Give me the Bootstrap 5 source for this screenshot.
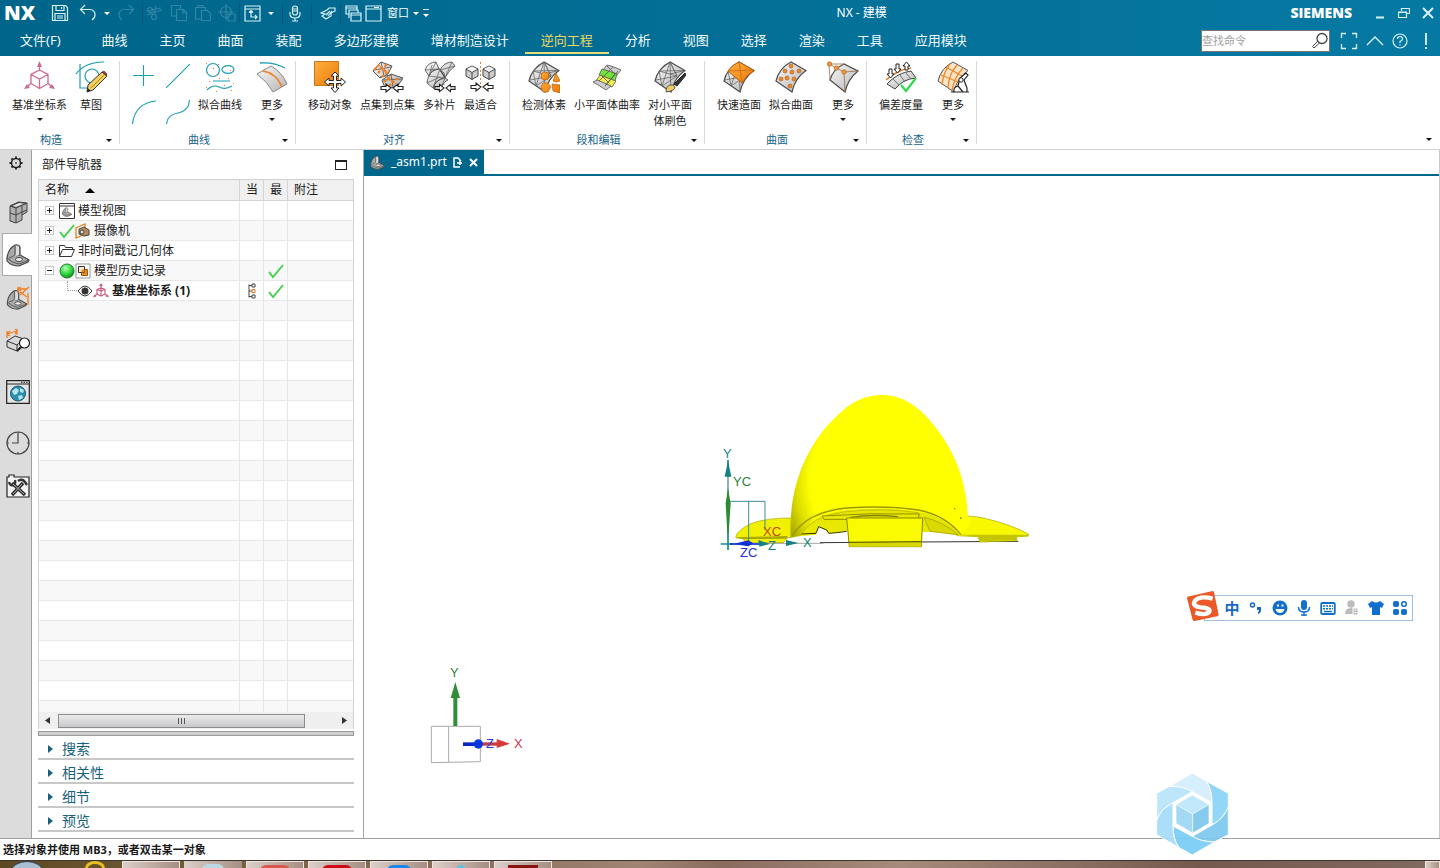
<!DOCTYPE html>
<html lang="zh-CN">
<head>
<meta charset="utf-8">
<meta name="viewport" content="width=device-width, initial-scale=1">
<title>NX - 建模</title>
<link href="https://cdn.jsdelivr.net/npm/bootstrap@5.3.0/dist/css/bootstrap.min.css" rel="stylesheet">
<style>
:root{--nx-blue:#00678c;--nx-line:#c8c8c8}
body{font-family:"Noto Sans","Noto Sans CJK SC",sans-serif;font-size:12px;line-height:16px;color:#1a1a1a;background:#fff;overflow:hidden}
svg{display:block;flex:none}
button{font:inherit;color:inherit;background:none;border:0;padding:0}
.hdr{background:linear-gradient(90deg,#00658a,#0679a3);color:#fff}
.titlebar{height:26px}
.brand{width:48px;padding-left:4px;font:800 20px/26px "Open Sans",sans-serif}
.qa{width:24px;height:26px;display:flex;align-items:center;justify-content:center}
.qa.off{opacity:.22}
.qa.slim{width:14px}
.qa-sep{width:1px;height:20px;background:#00567a}
.qa svg{fill:none;stroke:#d9f2f8;stroke-width:1.2}
.caret-s{width:0;height:0;border:3px solid transparent;border-top-color:currentColor;border-bottom:0}
.qa-text{font-size:11px}
.apptitle{font-size:12px}
.siemens{font:800 14px/28px "Open Sans",sans-serif}
.tabs{height:30px;font-size:13px}
.tabs a{color:#f0fafc;text-decoration:none;padding:2px 16px 0;line-height:24px;height:28px;border-bottom:2px solid transparent;white-space:nowrap;display:block}
.tabs a:first-child{padding:2px 25px 0 20px}
.tabs a.on{color:#f0d860;border-bottom-color:#e8dc78}
.find{width:129px;height:22px;background:#fff;border:1px solid #777;margin-right:2px}
.find input{width:100%;min-width:0;border:0;outline:0;font-size:11px;padding:0;background:none}
.find input::placeholder{color:#a0a0a0;opacity:1}
.ribbon{height:94px;border-bottom:1px solid #d0d0d0;font-size:11px}
.rgroup{border-right:1px solid #d8d8d8;margin:5px 0}
.rbody{padding:0 12px;height:70px;gap:8px}
.rbody.tail{padding-right:1px}
.rbtn{display:flex;flex-direction:column;align-items:center;min-width:32px;line-height:16px;white-space:nowrap}
.rbtn svg{width:32px;height:32px;margin-bottom:4px}
.rbtn.more{min-width:44px}
.rbtn .caret-s{margin-top:5px}
.rtitle{height:18px;color:#17648a;padding-right:7px}
.rtitle .caret-s,.rcollapse{color:#111}
.curves{display:grid;grid-template-columns:24px 24px;column-gap:10px;row-gap:12px;padding-top:3px;align-content:start}
.curves svg{width:24px;height:24px;fill:none;stroke:#1a9db5;stroke-width:1.1}
.rail{width:32px;background:#dcdcdc;border-right:1px solid #a0a0a0}
.rail button{height:43px;width:31px;display:flex;align-items:center;justify-content:center;padding-left:4px}
.rail .gear{height:26px;padding:0;margin-bottom:14px}
.rail .on{background:#fff;border:1px solid #aaa;border-right:0;width:30px;margin-left:2px;padding-left:1px;position:relative;margin-right:-1px}
.rail svg{width:24px;height:24px}
.panel{width:331px;padding:0 9px 6px 6px}
.ptitle{height:29px;padding:0 7px 0 4px}
.maxbox{width:12px;height:10px;border:1px solid #222;border-top-width:2px}
.treebox{border:1px solid #d4d4d4;border-bottom:0;border-top:1px solid #d0d0d0}
.tree{width:100%;table-layout:fixed;border-collapse:separate;border-spacing:0}
.tree th{height:21px;background:#f0f0f0;font-weight:400;padding:0 6px;border-right:1px solid #d4d4d4;border-bottom:1px solid #d4d4d4;white-space:nowrap}
.tree td{height:20px;padding:0;border-right:1px solid #e6e6e6;border-bottom:1px solid #e8e8e8;white-space:nowrap}
.tree tr>:last-child{border-right:0}
.tree tbody tr:nth-child(even){background:#f8f8f8}
.node{display:flex;align-items:center;height:19px;padding-left:6px}
.pm{width:9px;height:9px;border:1px solid #c4c4c4;background:#fff;margin-right:5px;position:relative;flex:none}
.pm::before,.pm.plus::after{content:"";position:absolute;background:#222;left:1px;top:3px;width:5px;height:1px}
.pm.plus::after{left:3px;top:1px;width:1px;height:5px}
.node svg{width:16px;height:16px}
.node span:last-child{margin-left:3px}
.kid{padding-left:26px}
.kid .elbow{width:10px;height:10px;margin-top:-9px;border:1px dotted #999;border-width:0 0 1px 1px;flex:none;margin-left:2px}
.tree td>svg{width:16px;height:16px;margin:0 auto}
.hscroll{height:17px;background:#efefef;padding:0 6px;border:1px solid #d4d4d4;border-width:0 1px}
.thumb{height:14px;width:247px;background:linear-gradient(#ececec,#c8c8cc);border:1px solid #8c8c8c}
.grip{width:8px;height:6px;background:repeating-linear-gradient(90deg,#555 0 1px,transparent 1px 3px)}
.splitter{height:5px;margin:2px 0 0;background:#d0d0d0;border:1px solid #999}
.sect{height:24px;border-bottom:2px solid var(--nx-line);font-size:14px;color:#17607c;padding:3px 0 0 10px;width:100%;gap:9px}
.tri{width:0;height:0;border:4px solid transparent;border-left:5px solid #17607c;border-right:0}
.stage{border-left:1px solid #a8a8a8;border-right:1px solid #c8c8c8}
.doctabs{height:26px;border-bottom:2px solid var(--nx-blue)}
.doctab{background:var(--nx-blue);color:#fff;width:120px;padding:0 6px;gap:6px}
.scene{position:relative}
.scene>svg{position:absolute}
.scene text{font-family:"Liberation Sans",sans-serif;font-size:13px}
.model{left:336px;top:204px}
.triad{left:36px;top:474px}
.ime{position:absolute;right:26px;top:419px;width:209px;height:26px;border:1px solid #9fbfe0;background:#fff;padding:0 0 0 15px;color:#1768c0}
.ime>svg:first-child{position:absolute;left:-19px;top:-6px}
.ime button{width:24px;height:24px;display:flex;align-items:center;justify-content:center;font-size:15px;font-weight:700}
.ime button svg{width:16px;height:16px}
.status{height:22px;border-top:1px solid #a0a0a0;font-size:11px;font-weight:700;padding-left:3px}
.task{height:8px;border-top:1px solid #40342e;background:linear-gradient(90deg,#5d4a22,#75603c 240px,#8d7263 500px,#a08473 640px,#8a6c5f 720px,#a68b7c 900px,#75594e 1200px,#816a60);padding-left:11px;overflow:hidden}
.start{width:32px;height:20px;border-radius:50%;background:#a8bfd4;border:1px solid #38485a}
.ie{width:20px;height:14px;border-radius:50%;border:3px solid #e8c020;margin:0 17px 0 42px}
.tb{width:58px;height:8px;margin-right:4px;border:1px solid #f0e4dc;background:linear-gradient(90deg,#dccfca,#a58e82);display:flex;justify-content:center;align-items:flex-start;border-bottom:0}
.tb i{width:30px;height:12px;margin-top:3px;border-radius:6px;display:block}
.mark-hex{position:absolute;right:211px;bottom:12px;z-index:3}
</style>
</head>
<body class="d-flex flex-column vh-100 position-relative">

<svg width="0" height="0" class="position-absolute" aria-hidden="true">
 <defs>
  <linearGradient id="gs" x1="0" y1="0" x2="1" y2="1"><stop offset="0" stop-color="#f8f8f8"/><stop offset="1" stop-color="#b4b4b4"/></linearGradient>
  <linearGradient id="go" x1="0" y1="0" x2="1" y2="1"><stop offset="0" stop-color="#ffb040"/><stop offset="1" stop-color="#ea7a08"/></linearGradient>
  <radialGradient id="gg" cx=".4" cy=".3" r=".7"><stop offset="0" stop-color="#b4ffb4"/><stop offset=".6" stop-color="#30d840"/><stop offset="1" stop-color="#109020"/></radialGradient>
  <radialGradient id="gy" gradientUnits="userSpaceOnUse" cx="600" cy="300" r="365"><stop offset="0" stop-color="#ff0"/><stop offset=".74" stop-color="#ff0"/><stop offset=".86" stop-color="#dede00"/><stop offset="1" stop-color="#a4a400"/></radialGradient>
  <symbol id="csys" viewBox="0 0 32 32"><g fill="none" stroke="#cc6b88" stroke-width="1.3"><path d="M15.500 9l8.500 4.500v9l-8.500 5-8.500-5v-9zM7 13.500l8.500 4.500 8.500-4.500M15.500 18v9.500M15.500 9V3M7 22.500l-5 4M24 22.500l5 4"/></g><path fill="#cc6b88" d="M15.500 0l2.500 6h-5zM0 28l3-5 3 4zM31 28l-3-5-3 4z"/></symbol>
  <symbol id="csys-s" viewBox="0 0 16 16"><path d="M8 1v7M4 6.500L8 5l4 1.500V11l-4 2-4-2zM8 8v5M8 8l4-1.500M8 8L4 6.500M4 11l-3 2.500M12 11l3 2.500" fill="none" stroke="#cc5f80" stroke-width="1.200"/><path d="M8 0l2 3H6zM0 14.500l1.500-3 2 2zM16 14.500l-1.500-3-2 2z" fill="#cc5f80"/></symbol>
  <symbol id="surf" viewBox="0 0 32 32"><path d="M1 20Q4 7 16 1L31 9.500Q20 17 17 31Z" fill="url(#gs)" stroke="#4a4a4a" stroke-width="1.200"/></symbol>
  <symbol id="mesh" viewBox="0 0 32 32"><use href="#surf"/><path d="M16 1L17 31M16 1L8 25 5 10 23 15 16 1 23 15 8 25M5 10L31 9.500M16 13L31 9.500M2 19l21-4M16 1L5 10" fill="none" stroke="#666" stroke-width=".8"/></symbol>
  <symbol id="arrows" viewBox="0 0 24 10"><path d="M1 3.500h5V1l5 4-5 4V6.500H1zM23 3.500h-5V1l-5 4 5 4V6.500h5z" fill="#fff" stroke="#222" stroke-width="1.100"/></symbol>
  <symbol id="cube" viewBox="0 0 14 15"><path d="M7 1l6 3v7l-6 3.500L1 11V4z" fill="#ccc" stroke="#444"/><path d="M1 4l6 3.500L13 4M7 7.500v7" fill="none" stroke="#444"/><path d="M2 4l5-2.400L12 4 7 6.800z" fill="#f2f2f2"/></symbol>
  <symbol id="patches" viewBox="0 0 32 32"><g fill="url(#gs)" stroke="#555" stroke-width=".9"><path d="M1 9Q4 1 12 1l3 7Q7 9 5 15zM16 9Q20 1 28 1l3 4Q24 10 21 17zM5 15Q8 8 16 8l5 9Q12 18 9 27L3 22Q3 18 5 15zM21 17l-5-8 4 3zM21 17Q12 18 9 27l7 3q1-8 8-11z"/></g><path d="M1 9l14-1M12 1L5 15M16 9l15-4M28 1l-7 16M5 15l16 2M16 8L9 27M8 4l-3 11M3 22l13-6M9 27l12-4M21 17l-5 13" fill="none" stroke="#666" stroke-width=".8"/></symbol>
  <symbol id="bracket" viewBox="0 0 24 24"><path d="M1 15Q2 6 9 2q4-1 5 2v8l9 5-1 2-9 4Q5 23 1 18z" fill="#aaa" stroke="#444" stroke-width="1.200"/><path d="M9 3v8Q8 14 3 15M14 12l-4 1M1 15q5 5 12 6l10-4" fill="none" stroke="#555"/><path d="M10 3q3-1 3 2v7l-3 1z" fill="#ddd"/><ellipse cx="13" cy="16.500" rx="3.500" ry="2" fill="#eee" stroke="#444"/></symbol>
  <symbol id="check" viewBox="0 0 16 16"><path d="M1 9l4 5L15 2" fill="none" stroke="#3cd048" stroke-width="1.800"/></symbol>
 </defs>
</svg>

<header class="hdr">
 <div class="titlebar d-flex align-items-center">
  <div class="brand">NX</div>
  <button class="qa" aria-label="保存"><svg width="18" height="18" viewBox="0 0 18 18"><path d="M1.500 1.500h13l2 2v13h-15zM5 1.500v5h8v-5M10.500 3v2M4 16V9.500h10V16M6 12h6M6 14h6"/></svg></button>
  <button class="qa ms-1" aria-label="撤销"><svg width="18" height="18" viewBox="0 0 18 18"><path d="M6 1L1.500 5.500 6 10M2 5.500h9a5 5 0 015 5.500q0 3-3 5"/></svg></button>
  <button class="qa slim" aria-label="撤销列表"><span class="caret-s"></span></button>
  <button class="qa off" aria-label="重做"><svg width="18" height="18" viewBox="0 0 18 18"><path d="M12 1l4.500 4.500L12 10M16 5.500H7A5 5 0 002 11q0 3 3 5"/></svg></button>
  <span class="qa-sep ms-1"></span>
  <button class="qa off" aria-label="剪切"><svg width="18" height="18" viewBox="0 0 18 18"><path d="M1 7l14-3M1 11l15-5"/><circle cx="4" cy="6" r="2.500"/><circle cx="8" cy="13" r="2.500"/><path d="M10 2L8 10"/></svg></button>
  <button class="qa off" aria-label="复制"><svg width="18" height="18" viewBox="0 0 18 18"><path d="M6 12H1.500V1.500h9V5M6.500 5.500h7l3 3v8h-10zM13 6v3h3"/></svg></button>
  <button class="qa off" aria-label="粘贴"><svg width="18" height="18" viewBox="0 0 18 18"><path d="M7 15H1.500V3.500h10V6M4 3.500v-2h5v2M7.500 6.500h6l3 3v7h-9z"/></svg></button>
  <button class="qa off" aria-label="定位"><svg width="18" height="18" viewBox="0 0 18 18"><circle cx="8" cy="8" r="5.500"/><path d="M8 0v16M0 8h16M10 10h7v7h-7z"/></svg></button>
  <span class="qa-sep"></span>
  <button class="qa" aria-label="变换"><svg width="17" height="17" viewBox="0 0 17 17"><path d="M1 1h15v15H1zM1 4h15M7 5.500V12h6M5 7.500l2-2 2 2M11 10l2 2-2 2"/></svg></button>
  <button class="qa slim" aria-label="更多变换"><span class="caret-s"></span></button>
  <span class="qa-sep ms-1"></span>
  <button class="qa" aria-label="语音"><svg width="12" height="17" viewBox="0 0 12 17"><rect x="3.500" y="1" width="5" height="9" rx="2.500"/><path d="M1 7v2q0 4 5 4t5-4V7M6 13v3M3 16h6M4 4h4M4 6h4"/></svg></button>
  <span class="qa-sep mx-1"></span>
  <button class="qa" aria-label="触控"><svg width="17" height="13" viewBox="0 0 17 13"><path d="M1 6l6-3 2-2h6v3l-4 2v3l-5 3-4-3 3-2zM6 8l4-4M8 9l4-5"/></svg></button>
  <span class="qa-sep"></span>
  <button class="qa" aria-label="层叠"><svg width="17" height="17" viewBox="0 0 17 17"><path d="M4 9H1V1h11v4M1 3h11M4 13V5h9v3M6 8h10v8H6zM6 10h10" /></svg></button>
  <button class="d-flex align-items-center qa-text gap-1"><svg width="18" height="17" viewBox="0 0 18 17" fill="none" stroke="#d9f2f8" stroke-width="1.200"><path d="M1 1h15v15H1zM1 4h15M9 2.500h5"/></svg><span>窗口</span><span class="caret-s"></span></button>
  <button class="qa slim" aria-label="自定义"><span class="d-flex flex-column align-items-center border-top pt-1"><span class="caret-s"></span></span></button>
  <div class="flex-grow-1 text-center apptitle">NX - 建模</div>
  <div class="siemens">SIEMENS</div>
  <div class="d-flex align-items-center ms-3">
   <button class="qa" aria-label="最小化"><svg width="12" height="12" viewBox="0 0 12 12"><path d="M2 10.500h8" stroke-width="2"/></svg></button>
   <button class="qa" aria-label="还原"><svg width="12" height="12" viewBox="0 0 12 12"><path d="M3.500 4V1.500h8v5H9M.5 5h8v5.500h-8zM.5 5.500h8"/></svg></button>
   <button class="qa" aria-label="关闭"><svg width="12" height="12" viewBox="0 0 12 12"><path d="M1 1l10 10M11 1L1 11" stroke-width="2"/></svg></button>
  </div>
 </div>
 <div class="tabs d-flex">
  <nav class="d-flex flex-grow-1">
   <a href="#">文件(F)</a><a href="#">曲线</a><a href="#">主页</a><a href="#">曲面</a><a href="#">装配</a><a href="#">多边形建模</a><a href="#">增材制造设计</a><a href="#" class="on">逆向工程</a><a href="#">分析</a><a href="#">视图</a><a href="#">选择</a><a href="#">渲染</a><a href="#">工具</a><a href="#">应用模块</a>
  </nav>
  <div class="d-flex align-items-center gap-2 pe-1">
   <label class="find d-flex align-items-center"><input type="text" placeholder="查找命令" aria-label="查找命令"><svg width="18" height="18" viewBox="0 0 18 18" fill="none" stroke="#444"><circle cx="11" cy="6.500" r="5" stroke-width="1.300"/><path d="M7 9l-5.500 5.500 1.500 1.500L8.500 11"/></svg></label>
   <button aria-label="全屏"><svg width="18" height="18" viewBox="0 0 18 18" fill="none" stroke="#d9f2f8" stroke-width="1.300"><path d="M1.500 6V1.500H6M12 1.500h4.500V6M16.500 12v4.500H12M6 16.500H1.500V12"/></svg></button>
   <button aria-label="折叠功能区"><svg width="18" height="18" viewBox="0 0 18 18" fill="none" stroke="#d9f2f8" stroke-width="1.400"><path d="M1 13l8-8 8 8"/></svg></button>
   <button aria-label="帮助"><svg width="16" height="16" viewBox="0 0 16 16" fill="none" stroke="#d9f2f8" stroke-width="1.200"><circle cx="8" cy="8" r="7"/><path d="M5.500 6q0-2.500 2.500-2.500T10.500 6Q10.500 7.500 8 8.500V10M8 11.200v1.300"/></svg></button>
   <button class="px-2" aria-label="提示"><svg width="4" height="18" viewBox="0 0 4 18" stroke="#fff" stroke-width="1.600"><path d="M2 1v12M2 15v2"/></svg></button>
  </div>
 </div>
</header>

<section class="ribbon d-flex">
 <div class="rgroup">
  <div class="rbody d-flex">
   <button class="rbtn"><svg><use href="#csys"/></svg>基准坐标系<span class="caret-s"></span></button>
   <button class="rbtn"><svg viewBox="0 0 32 32"><path d="M1 13Q10 1 29 1M5 3v24h12" fill="none" stroke="#1a9db5" stroke-width="1.200"/><circle cx="17" cy="15" r="7" fill="none" stroke="#1a9db5" stroke-width="1.200"/><path d="M12 31l1-7L27 11l5 4-14 14z" fill="#f0d060" stroke="#333"/><path d="M27 11l2-1 3 3v2z" fill="#b03030" stroke="#333" stroke-width=".6"/><path d="M12 31l.6-4 3 2.500z" fill="#222"/><path d="M16 27L29 14" stroke="#b08820"/></svg>草图</button>
  </div>
  <div class="rtitle d-flex align-items-center"><span class="flex-grow-1 text-center">构造</span><span class="caret-s ms-1"></span></div>
 </div>
 <div class="rgroup">
  <div class="rbody tail d-flex">
   <div class="curves">
    <button aria-label="点"><svg viewBox="0 0 24 24"><path d="M11.500 1v21M1 11.500h21"/></svg></button>
    <button aria-label="直线"><svg viewBox="0 0 24 24"><path d="M0 24L24 0"/></svg></button>
    <button aria-label="圆弧"><svg viewBox="0 0 24 24"><path d="M.5 24Q3 3 24 1"/></svg></button>
    <button aria-label="样条"><svg viewBox="0 0 24 24"><path d="M.5 24Q1 15 12 13T23.500 0"/></svg></button>
   </div>
   <button class="rbtn"><svg viewBox="0 0 32 32" fill="none" stroke="#1a9db5" stroke-width="1.200"><circle cx="9" cy="9" r="6.500"/><ellipse cx="24" cy="8.500" rx="6" ry="3.800"/><path d="M9 20h17M3 29q6-6 12-3t13-1"/><g fill="#e8781e" stroke="none"><path d="M2 2h1v1H2zM14 3h1v1h-1zM9 7h1v1H9zM3 12h1v1H3zM12 14h1v1h-1zM21 5h1v1h-1zM26 9h1v1h-1zM5 20h1v1H5zM15 17h1v1h-1zM24 17h1v1h-1zM2 26h1v1H2zM12 30h1v1h-1zM20 24h1v1h-1zM29 22h1v1h-1zM27 29h1v1h-1z"/></g></svg>拟合曲线</button>
   <button class="rbtn more"><svg viewBox="0 0 32 32"><path d="M4 2Q18 1 29 7" fill="none" stroke="#1a9db5" stroke-width="1.300"/><path d="M1 13L15 5Q26 11 31 23L17 31Q12 21 1 13z" fill="url(#gs)" stroke="#888"/><path d="M7 10q13 2 19 16" fill="none" stroke="#f08020" stroke-width="1.600"/></svg>更多<span class="caret-s"></span></button>
  </div>
  <div class="rtitle d-flex align-items-center"><span class="flex-grow-1 text-center">曲线</span><span class="caret-s ms-1"></span></div>
 </div>
 <div class="rgroup">
  <div class="rbody d-flex">
   <button class="rbtn"><svg viewBox="0 0 32 32"><path d="M.5.5h24v24H.5z" fill="url(#go)" stroke="#c8781a"/><path d="M21 11l4 4h-2.500v4.500H27V17l4.500 4-4.500 4v-2.500h-4.500V27H25l-4 4.500L17 27h2.500v-4.500H15V25l-4.500-4 4.500-4v2.500h4.500V15H17z" fill="#fff" stroke="#222"/></svg>移动对象</button>
   <button class="rbtn"><svg viewBox="0 0 32 32"><path d="M1 10L9 1l11 4-4 8-8 4zM10 19l9-6 12 4-6 9-12 1z" fill="url(#gs)" stroke="#555"/><path d="M2 9l17-3M9 1l3 14M11 19l19-1M19 13l2 13M8 16l11-2" stroke="#666"/><path d="M2 9l6-6M6 12l9-9M8 6l8 6M10 16l7-7M12 21l7-6M17 25l9-8M16 17l8 6" stroke="#f08020" stroke-width="2.200" stroke-dasharray="3 1.500"/><use href="#arrows" x="8" y="22" width="24" height="10"/></svg>点集到点集</button>
   <button class="rbtn"><svg viewBox="0 0 32 32"><use href="#patches"/><use href="#arrows" x="10" y="22" width="22" height="10"/></svg>多补片</button>
   <button class="rbtn"><svg viewBox="0 0 32 32"><use href="#cube" x="0" y="4" width="14" height="15"/><use href="#cube" x="17" y="4" width="14" height="15"/><path d="M15.500 1v22" stroke="#d88040" stroke-dasharray="2 2"/><use href="#arrows" x="5" y="21" width="24" height="10"/></svg>最适合</button>
  </div>
  <div class="rtitle d-flex align-items-center"><span class="flex-grow-1 text-center">对齐</span><span class="caret-s ms-1"></span></div>
 </div>
 <div class="rgroup">
  <div class="rbody d-flex">
   <button class="rbtn"><svg viewBox="0 0 32 32"><use href="#mesh"/><g fill="url(#go)" stroke="#b86010" stroke-width=".7"><circle cx="17" cy="15" r="4"/><path d="M28 12l4 8q-4 2-7 0zM15 22h5l3 4-3 5h-5l-2-5zM24 23l8 1v8l-7-2z"/></g></svg>检测体素</button>
   <button class="rbtn"><svg viewBox="0 0 32 32"><g stroke="#555" stroke-width=".8"><path d="M16 4Q22 5 30 9l-4 5Q18 11 12 9z" fill="#ccc"/><path d="M11 8Q18 10 26 13l-2 7Q16 17 8 14z" fill="#72e23c"/><path d="M9 14Q16 17 25 20l-4 6Q14 22 5 20z" fill="#f2ee50"/><path d="M6 19Q14 22 20 25l-5 4Q9 25 2 21z" fill="#ccc"/><path d="M16 5l8 8-10 12M22 6L8 20M27 10L14 25M10 14l8 8" fill="none"/></g></svg>小平面体曲率</button>
   <button class="rbtn"><svg viewBox="0 0 32 32"><use href="#mesh"/><path d="M20 23L31 12l1 2-9 11z" fill="#333" stroke="#222"/><path d="M12 31q0-6 4-7t5 2q0 4-9 5z" fill="#f0cc60" stroke="#555"/></svg>对小平面<br>体刷色</button>
  </div>
  <div class="rtitle d-flex align-items-center"><span class="flex-grow-1 text-center">段和编辑</span><span class="caret-s ms-1"></span></div>
 </div>
 <div class="rgroup">
  <div class="rbody tail d-flex">
   <button class="rbtn"><svg viewBox="0 0 32 32"><use href="#mesh"/><path d="M5 10Q9 4 16 1L31 9.500Q23 14 19 22z" fill="url(#go)" stroke="#c06008"/><path d="M16 1l3 20M5 10l26-1" stroke="#c86810" stroke-width=".8"/></svg>快速造面</button>
   <button class="rbtn"><svg viewBox="0 0 32 32"><use href="#surf"/><g fill="#f08828" stroke="#b05810" stroke-width=".6"><circle cx="16" cy="5" r="2"/><circle cx="10" cy="10" r="2"/><circle cx="17" cy="11" r="2"/><circle cx="24" cy="10" r="2"/><circle cx="6" cy="18" r="2"/><circle cx="12" cy="17" r="2"/><circle cx="19" cy="18" r="2"/><circle cx="15" cy="25" r="2"/></g></svg>拟合曲面</button>
   <button class="rbtn more"><svg viewBox="0 0 32 32"><path d="M3 19Q6 8 17 3L31 10Q21 18 18 31Z" fill="url(#gs)" stroke="#4a4a4a" stroke-width="1.200"/><path d="M2 3h15M2 3L3 19M2 3l15 8 14-1M17 11l1 20" fill="none" stroke="#a06a40" stroke-width=".8"/><g fill="#f09838" stroke="#b06820" stroke-width=".7"><circle cx="2.500" cy="3" r="2.200"/><circle cx="9.500" cy="7" r="2.200"/><circle cx="17" cy="11" r="2.200"/></g></svg>更多<span class="caret-s"></span></button>
  </div>
  <div class="rtitle d-flex align-items-center"><span class="flex-grow-1 text-center">曲面</span><span class="caret-s ms-1"></span></div>
 </div>
 <div class="rgroup">
  <div class="rbody tail d-flex">
   <button class="rbtn"><svg viewBox="0 0 32 32"><path d="M1 19Q14 8 26 7" fill="none" stroke="#e87820" stroke-width="1.500"/><path d="M2 23Q12 12 26 10l5 7Q18 18 10 28z" fill="url(#gs)" stroke="#444"/><path d="M8 18l6 6M15 14l5 7M21 12l5 6" stroke="#777"/><path d="M4 8h3v5h2l-3.500 4L2 13h2zM11 3h3v5h2l-3.500 4L9 8h2zM20 9V5h-2l3.500-4L25 5h-2v4z" fill="#fff" stroke="#222"/><path d="M16 24l5 6 10-13" fill="none" stroke="#30d850" stroke-width="2.200"/></svg>偏差度量</button>
   <button class="rbtn more"><svg viewBox="0 0 32 32"><path d="M1 20Q4 7 16 1L31 9.500Q20 17 17 31Z" fill="#fbe4c8" stroke="#555"/><path d="M4 14l17 7M9 6l16 9M13 3Q6 12 5 24M20 4Q12 12 11 27M26 7Q18 15 15 29" fill="none" stroke="#f08828" stroke-width="1.300"/><path d="M14 31h18M17 31q-1-5 4-6l2-8 6-5 2 2-4 5 3 8v4M21 25l5 6" fill="#fff" stroke="#222" stroke-width="1.200"/><circle cx="24" cy="19" r="2.200" fill="#fff" stroke="#222"/></svg>更多<span class="caret-s"></span></button>
  </div>
  <div class="rtitle d-flex align-items-center"><span class="flex-grow-1 text-center">检查</span><span class="caret-s ms-1"></span></div>
 </div>
 <button class="rcollapse ms-auto align-self-end pb-2 pe-1 me-1" aria-label="功能区选项"><span class="caret-s d-block"></span></button>
</section>

<main class="d-flex flex-grow-1 overflow-hidden">
 <aside class="rail d-flex flex-column flex-shrink-0">
  <button class="gear" aria-label="设置"><svg viewBox="0 0 24 24" fill="none" stroke="#222"><circle cx="12" cy="12" r="4.500" stroke-width="1.500"/><path d="M12 5.500v2M12 16.500v2M5.500 12h2M16.500 12h2M7.500 7.500l1 1M15.500 15.500l1 1M16.500 7.500l-1 1M8.500 15.500l-1 1" stroke-width="1.800"/><circle cx="12" cy="12" r=".5"/></svg></button>
  <button aria-label="装配导航器"><svg viewBox="0 0 24 24" stroke="#444"><path d="M4 6l9-4 8 1v9l-5 3v5l-6 3-6-2z" fill="#b0b0b0"/><path d="M4 6l6 2 11-5M10 8v15M16 6v9M4 13l6 2 6-3 5-2M4 6l9-4" fill="none"/><path d="M5 6l8-3.500 7 1L10 7.500z" fill="#e4e4e4"/></svg></button>
  <button class="on" aria-label="部件导航器"><svg><use href="#bracket"/></svg></button>
  <button aria-label="约束导航器"><svg viewBox="0 0 24 24"><use href="#bracket" x="0" y="3" width="22" height="21"/><path d="M12 1v6M22 7v12M12 3h9M15 1l-3 2 3 2M14 6l7 5M23 1l-9 8" stroke="#f08020" fill="none" stroke-width="1.300"/></svg></button>
  <button aria-label="重用库"><svg viewBox="0 0 24 24"><path d="M1 12l8-5 9 3v7l-7 5-10-4z" fill="#d8d8d8" stroke="#333"/><path d="M1 12l10 4 7-6M11 16v6" fill="none" stroke="#333"/><path d="M1 2v7M11 0v6M1 5l10-3M4 2L1 5l3 2M9 0l2 2-2 3" fill="none" stroke="#f08020" stroke-width="1.300"/><circle cx="18.500" cy="14" r="5" fill="#fff" stroke="#222" stroke-width="1.200"/><path d="M15 18l-4 4" stroke="#222" stroke-width="2"/></svg></button>
  <button class="mt-2" aria-label="浏览器"><svg viewBox="0 0 24 24"><path d="M.7.700h22.600v22.600H.7z" fill="#e4e4e4" stroke="#222" stroke-width="1.200"/><path d="M1 4h22" stroke="#222"/><path d="M15 2.300h7" stroke="#222" stroke-dasharray="1.500 1"/><circle cx="12" cy="13.500" r="7.500" fill="#2d8fae" stroke="#1a5a70"/><path d="M6 11l4-3 3 2-2 4-3 1zM14 8l4 2-1 3-3-1zM12 16l4-1 1 3-4 2z" fill="#b8e4f0"/></svg></button>
  <button class="mt-2" aria-label="历史记录"><svg viewBox="0 0 24 24" fill="none" stroke="#444" stroke-width="1.200"><circle cx="12" cy="12" r="11"/><path d="M12 3v9H6M12 21v2M1 12h2M21 12h2M12 1v2"/></svg></button>
  <button aria-label="工具"><svg viewBox="0 0 24 24"><path d="M1 3h2V1h5v2h15v20H1z" fill="#f4f4f4" stroke="#222" stroke-width="1.200"/><path d="M6 9l13 12M17 9L6 21" stroke="#333" stroke-width="3.500"/><path d="M3 8q1 4 4 3t2-5M12 7q4-3 7 1l2 3" fill="none" stroke="#333" stroke-width="2.400"/><path d="M7 10l11 10M16 10L7 20" stroke="#aaa"/></svg></button>
 </aside>

 <section class="panel d-flex flex-column flex-shrink-0">
  <div class="ptitle d-flex align-items-center justify-content-between"><span>部件导航器</span><button class="maxbox" aria-label="最大化"></button></div>
  <div class="treebox flex-grow-1 overflow-hidden" style="height:0">
   <table class="tree">
    <colgroup><col style="width:201px"><col style="width:24px"><col style="width:24px"><col></colgroup>
    <thead><tr><th><span class="d-flex align-items-center gap-3">名称<svg width="10" height="5" viewBox="0 0 10 5"><path d="M5 0l5 5H0z"/></svg></span></th><th>当</th><th>最</th><th>附注</th></tr></thead>
    <tbody id="rows">
     <tr><td><div class="node"><span class="pm plus"></span><svg viewBox="0 0 16 16"><path d="M.5.500h15v15H.5zM.5 3h15" fill="#fff" stroke="#333"/><use href="#bracket" x="3" y="4" width="10" height="10"/></svg><span>模型视图</span></div></td><td></td><td></td><td></td></tr>
     <tr><td><div class="node"><span class="pm plus"></span><svg><use href="#check"/></svg><svg viewBox="0 0 16 16"><path d="M1 5l9-4v10l-9 4z" fill="#fff" stroke="#e08020" stroke-width="1.300"/><path d="M4 6l5-2 5 3v5l-5 1-5-2z" fill="#b88a5a" stroke="#444"/><circle cx="7" cy="9" r="2" fill="#ddd" stroke="#444"/></svg><span>摄像机</span></div></td><td></td><td></td><td></td></tr>
     <tr><td><div class="node"><span class="pm plus"></span><svg viewBox="0 0 16 16" fill="#fff" stroke="#333"><path d="M.5 13.500v-11h5l1 2h7v2M.5 13.500l3-7h12l-3 7z"/></svg><span>非时间戳记几何体</span></div></td><td></td><td></td><td></td></tr>
     <tr><td><div class="node"><span class="pm"></span><svg viewBox="0 0 16 16"><circle cx="8" cy="8" r="7" fill="url(#gg)" stroke="#208030"/></svg><svg viewBox="0 0 16 16"><path d="M1 1h14v14H1z" fill="#fff" stroke="#999"/><path d="M6.500 6.500h6v6h-6z" fill="#f08820" stroke="#a05810"/><path d="M3.500 3.500h6v6h-6z" fill="#f8e8d0" stroke="#333"/><path d="M6.500 6.500h3v3h-3z" fill="#f08820"/></svg><span>模型历史记录</span></div></td><td></td><td><svg><use href="#check"/></svg></td><td></td></tr>
     <tr><td><div class="node kid"><span class="elbow"></span><svg viewBox="0 0 16 16"><path d="M1 8q7-10 14 0-7 10-14 0z" fill="#fff" stroke="#333"/><circle cx="8" cy="8" r="3.500" fill="#333"/></svg><svg><use href="#csys-s"/></svg><span class="fw-bold">基准坐标系 (1)</span></div></td><td><svg viewBox="0 0 16 16" fill="none" stroke="#444"><path d="M5 1.500v13M5 2.500h3M5 8h3M5 13.500h3M8 1h3v3H8zM8 12h3v3H8z"/><path d="M8 6.500h3v3H8z" stroke="#e07820"/></svg></td><td><svg><use href="#check"/></svg></td><td></td></tr>
    </tbody>
   </table>
  </div>
  <div class="hscroll d-flex align-items-center gap-2">
   <svg width="5" height="7" viewBox="0 0 5 7"><path d="M5 0v7L0 3.500z" fill="#333"/></svg>
   <div class="thumb d-flex align-items-center justify-content-center"><span class="grip"></span></div>
   <svg class="ms-auto" width="5" height="7" viewBox="0 0 5 7"><path d="M0 0v7l5-3.500z" fill="#333"/></svg>
  </div>
  <div class="splitter mb-0"></div>
  <button class="sect d-flex align-items-center"><span class="tri"></span>搜索</button>
  <button class="sect d-flex align-items-center"><span class="tri"></span>相关性</button>
  <button class="sect d-flex align-items-center"><span class="tri"></span>细节</button>
  <button class="sect d-flex align-items-center"><span class="tri"></span>预览</button>
 </section>

 <section class="stage d-flex flex-column flex-grow-1">
  <div class="doctabs d-flex">
   <div class="doctab d-flex align-items-center"><svg width="15" height="15"><use href="#bracket"/></svg><span>_asm1.prt</span><svg width="10" height="11" viewBox="0 0 10 11" fill="none" stroke="#fff" stroke-width="1.500"><path d="M7 10H1V1h4l3 3M4 6h5M7 3v5"/></svg><button aria-label="关闭标签"><svg width="9" height="9" viewBox="0 0 9 9" stroke="#fff" stroke-width="2"><path d="M1 1l7 7M8 1L1 8"/></svg></button></div>
  </div>
  <div class="scene flex-grow-1">
   <svg class="model" width="350" height="190" viewBox="0 0 350 190">
    <g transform="scale(.33333)">
     <path d="M360 488L955 484" stroke="#333" stroke-width="3"/>
     <path d="M350 464l-2-4 10-20 22 10 6 10 20-2 36-6v-60L345 400 280 470z" fill="#e8e800"/>
     <path d="M300 462l48-2 8-20 24 10 6 10 24-2 30-4" fill="none" stroke="#333300" stroke-width="3"/>
     <path d="M108 468Q112 452 150 432Q200 412 285 414V470L262 474 250 488H135L130 476 108 474z" fill="#f0f000" stroke="#a8a800" stroke-width="2"/>
     <path d="M108 472L262 468v8L130 478z" fill="#a8a800"/>
     <path d="M770 410Q800 404 850 414Q930 432 985 462V468L950 470V482L840 486 834 470 770 467z" fill="#f8f800" stroke="#a8a800" stroke-width="2"/>
     <path d="M780 464L985 464v5L950 472v8L840 484l-6-14z" fill="#c4c400"/>
     <path d="M330 410Q520 365 720 400L785 467 700 456H660L640 412 360 425z" fill="#e6e600"/>
     <path d="M672 412Q730 425 775 464L690 454z" fill="#dada00" stroke="#989800" stroke-width="2"/>
     <path d="M272 472C264 300 335 170 430 90C465 60 505 45 545 45C605 45 655 75 705 140C775 225 803 330 803 410L815 416 800 450 780 466C750 425 710 405 655 396Q540 378 430 392Q335 405 300 468z" fill="url(#gy)"/>
     <path d="M275 470Q320 395 440 384Q560 376 655 390Q735 405 783 464" fill="none" stroke="#9a9a00" stroke-width="4"/>
     <path d="M300 468Q335 408 430 396Q540 382 655 398" fill="none" stroke="#b0b000" stroke-width="2"/>
     <path d="M366 408Q510 398 658 402L654 418 372 418z" fill="#eaea00" stroke="#909000" stroke-width="3"/>
     <path d="M452 412Q510 402 595 410" stroke="#858500" fill="none" stroke-width="4"/>
     <path d="M440 414H668L664 500H448z" fill="#fafa00" stroke="#888800" stroke-width="3"/>
     <path d="M444 487L664 485V500H450z" fill="#d8d800"/><path d="M444 487L664 485" stroke="#444400" stroke-width="3"/>
     <path d="M762 384h4v4h-4zM780 412h4v5h-4z" fill="#8a8a00"/>
     <path d="M90 364H195V450M146 364V485" fill="none" stroke="#3c8c9c" stroke-width="3"/>
     <path d="M84 240V510M62 492H100" stroke="#148c8c" stroke-width="5"/>
     <path d="M84 290V335" stroke="#bbb" stroke-width="4"/>
     <path d="M84 242L74 290H94z" fill="#148080"/><path d="M84 325L92 370 86 460H82L77 370z" fill="#2c8a34"/>
     <path d="M200 490H370" stroke="#777" stroke-width="2"/>
     <path d="M100 492L145 481 160 490 145 499z" fill="#1030e0"/><path d="M90 492H180" stroke="#1030d0" stroke-width="5"/><path d="M175 480L210 492 178 500zM258 480L295 489 258 498z" fill="#188080"/>
    </g>
    <text x="23" y="78" fill="#248090">Y</text><text x="33" y="106" fill="#308038">YC</text><text x="63" y="156" fill="#c04820">XC</text><text x="68" y="170" fill="#248080">Z</text><text x="40" y="177" fill="#2030e0">ZC</text><text x="103" y="167" fill="#208070">X</text>
   </svg>
   <svg class="triad" width="150" height="130" viewBox="0 0 150 130">
    <g transform="scale(.33333)"><path d="M94 229H241V335L94 338zM146 229V337" fill="none" stroke="#aaa" stroke-width="3"/><path d="M160 228V140H172V228z" fill="#2f8f38"/><path d="M166 96L180 144H152z" fill="#2f8f38"/><path d="M240 277H295V287H240z" fill="#c43c48"/><path d="M290 267L330 281 290 294z" fill="#d83838"/><path d="M189 277H235V288H189z" fill="#0828c8"/><circle cx="235" cy="282" r="14" fill="#0838e0"/></g>
    <text x="50" y="27" fill="#348040">Y</text><text x="86" y="98" fill="#3038e0">Z</text><text x="114" y="98" fill="#c83848">X</text>
   </svg>
   <div class="ime d-flex">
    <svg width="33" height="33" viewBox="48 30 99 99"><path d="M52 50L128 33Q131 33 132 37L146 104Q146 108 142 109L74 123Q70 124 68 120L51 54z" fill="#ea5a28"/><path d="M128 56Q90 46 75 62Q64 78 92 82Q122 84 118 95Q108 108 76 98" fill="none" stroke="#fff" stroke-width="13"/></svg>
    <button>中</button>
    <button aria-label="标点"><svg viewBox="0 0 16 16"><circle cx="4.500" cy="5" r="2" fill="none" stroke="#1768c0" stroke-width="1.500"/><path d="M9 7h4v3q0 3-3 4v-2q1 0 1-2H9z" fill="#1768c0"/></svg></button>
    <button aria-label="表情"><svg viewBox="0 0 16 16"><circle cx="8" cy="8" r="7.500" fill="#1270cc"/><path d="M3.500 9h9q-1 4-4.500 4T3.500 9zM5 4.500h2v2H5zM9.500 4.500h2v2h-2z" fill="#fff"/></svg></button>
    <button aria-label="语音输入"><svg viewBox="0 0 16 16"><rect x="5" y="0" width="6" height="10" rx="3" fill="#1270cc"/><path d="M2.500 7q0 5 5.500 5t5.500-5M8 12v4M5 15h6" fill="none" stroke="#1270cc" stroke-width="1.500"/></svg></button>
    <button aria-label="软键盘"><svg viewBox="0 0 16 16"><rect x="1.200" y="3" width="13.600" height="11" rx="1" fill="none" stroke="#1270cc" stroke-width="1.800"/><path d="M3 6h10M3 8.700h10" stroke="#1270cc" stroke-width="1.500" stroke-dasharray="2 1"/><path d="M4 11.500h8" stroke="#1270cc" stroke-width="1.500"/></svg></button>
    <button aria-label="账户"><svg viewBox="0 0 16 16" fill="#bcbcbc"><circle cx="7" cy="4" r="3.700"/><path d="M1 14q0-6 6-6 3 0 4 1v5z"/><path d="M9 8h5v7H9z" stroke="#fff"/><path d="M10.500 10h2M10.500 12.500h2" stroke="#fff"/></svg></button>
    <button aria-label="皮肤"><svg viewBox="0 0 16 16"><path d="M4 1q4 3 8 0l4 3-2 4-2-1v8H4V7L2 8 0 4z" fill="#1270cc"/></svg></button>
    <button aria-label="工具箱"><svg viewBox="0 0 16 16" fill="#1270cc"><rect x="1" y="1" width="6" height="6" rx="2"/><circle cx="12" cy="4" r="2.300" fill="none" stroke="#1270cc" stroke-width="1.600"/><rect x="1" y="9" width="6" height="6" rx="2"/><rect x="9" y="9" width="6" height="6" rx="2"/></svg></button>
   </div>
  </div>
 </section>
</main>

<footer>
 <div class="status d-flex align-items-center">选择对象并使用 MB3，或者双击某一对象</div>
 <div class="task d-flex">
  <span class="start"></span><span class="ie"></span>
  <span class="tb"></span><span class="tb border-0 bg-transparent"><i style="background:#bcd8e4;width:22px"></i></span><span class="tb"><i style="background:#d85850"></i></span><span class="tb"><i style="background:#d00818"></i></span><span class="tb"><i style="background:#1888e8;width:24px"></i></span><span class="tb"><i style="background:#60c0e0;width:8px"></i></span><span class="tb"><i style="background:#881410;border-radius:0"></i></span>
  <span class="tb ms-auto me-0" style="width:15px"></span>
 </div>
</footer>

<svg class="mark-hex" width="73" height="84" viewBox="80 36 219 252" opacity=".92" aria-hidden="true">
 <g stroke="#fff" stroke-width="3"><path d="M189 39L232 64Q248 90 248 128L189 95 126 76z" fill="#d4eefc"/><path d="M232 64L297 100V140Q285 175 248 195V128Q248 90 232 64z" fill="#8ad4f8"/><path d="M297 140V224L255 246Q210 245 189 229L248 195Q285 175 297 140z" fill="#7cc8f0"/><path d="M255 246L189 285 148 262Q130 235 131 198L189 229Q215 245 255 246z" fill="#78cdf6"/><path d="M148 262L82 224V180Q92 148 131 128V198Q130 235 148 262z" fill="#a4dcf8"/><path d="M82 180V100L118 80Q160 76 189 95L131 128Q92 148 82 180z" fill="#b8e4fa"/></g>
 <path d="M189 95L248 128V195L189 229 131 198V128z" fill="#fff"/><path d="M189 106L238 134 190 162 141 134z" fill="#bce6fb"/><path d="M141 134L190 162V218L141 190z" fill="#9cd6f4"/><path d="M238 134L190 162V218L238 190z" fill="#7cc6ee"/><path d="M141 134L190 162 238 134M190 162V218" fill="none" stroke="#fff" stroke-width="2"/>
</svg>

<script>
// pad the tree with blank grid rows below the last node
document.getElementById('rows').insertAdjacentHTML('beforeend','<tr><td></td><td></td><td></td><td></td></tr>'.repeat(21));
</script>
<script src="https://cdn.jsdelivr.net/npm/bootstrap@5.3.0/dist/js/bootstrap.bundle.min.js"></script>
</body>
</html>
